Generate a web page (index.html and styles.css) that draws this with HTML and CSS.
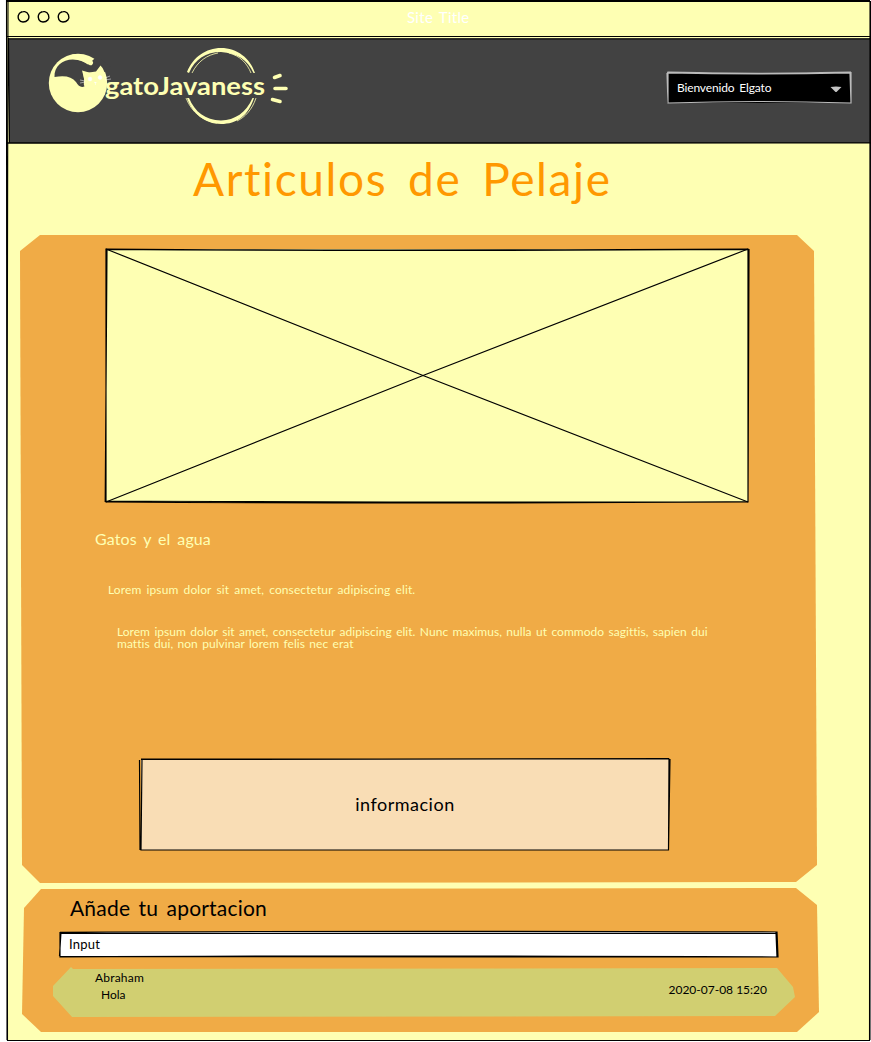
FILE: index.html
```html
<!DOCTYPE html>
<html lang="es">
<head>
<meta charset="utf-8">
<title>Articulos de Pelaje</title>
<link rel="stylesheet" href="styles.css">
</head>
<body>
<div class="window">
  <div class="titlebar">
    <svg class="dots" width="54" height="14" viewBox="0 0 54 14">
      <path d="M3 3C6 .8 10 1 11.500 5C13 9 10 12 6 12C2 12 .5 8 1.500 5Q2 3 5 1.700"/>
      <path d="M23 3C26 .8 30 1 31.500 5C33 9 30 12 26 12C22 12 20.500 8 21.500 5Q22 3 25 1.700"/>
      <path d="M43 3C46 .8 50 1 51.500 5C53 9 50 12 46 12C42 12 40.500 8 41.500 5Q42 3 45 1.700"/>
    </svg>
    <span class="site-title">Site Title</span>
  </div>
  <header class="header">
    <svg class="logo" width="242" height="82" viewBox="48 45 242 82">
      <circle class="cream" cx="78" cy="83" r="29.200"/>
      <path class="gap" d="M54.500 77C54 66 63 59 74 59.500C81 60 85 62.500 88 64.500L92 61L97 56L112 68L101 74L83 72L85 86Q80 89 76 82Q70 74 54.500 77Z"/>
      <path class="tail" d="M74 56.700C82 57 86 59.500 90.500 62.700"/>
      <path class="cream" d="M82 70.500L89 72.500L96 71.500L100.500 65.500Q104 69 106 77V84L100 89L87 89Q82 85 84.500 80Z"/>
      <g class="face"><circle cx="90" cy="79" r="1.900"/><circle cx="100" cy="77.500" r="1.900"/><path d="M94 82l1.500 1 1-1M95.500 83v2M80 80l5 1M80 83l5-1M105 78l5-2M105 80l6-1"/></g>
      <text class="logo-text" x="105" y="95" textLength="160" lengthAdjust="spacingAndGlyphs">gatoJavaness</text>
      <path class="cream" d="M187 72C193 57 206 48 221 48C237 48 250 58 255 73L253.500 73C248 60 237 53 221 52C206 52 195 59 189 73Z"/>
      <path class="cream" d="M187 98C192 113 205 124 221 124C237 124 248 116 254 98L252.500 98C246 113 235 120 221 120.500C205 120 195 112 189 98Z"/>
      <path class="thin" d="M192 73C198 61 207 55 218 53M229 53C240 56 247 63 251 73M186 98C192 113 203 121 217 123M256 98C252 110 245 117 237 121"/>
      <path class="rays" d="M274.500 77.500L280 75.500M275 88.500H286M272.500 99.500L280 101.500"/>
    </svg>
    <div class="select">
      <span class="user">Bienvenido Elgato</span>
      <svg class="caret" width="12" height="7" viewBox="0 0 12 7"><path d="M.5 1Q6 0 11.500 1L6.500 6H5.500Z"/></svg>
      <svg class="sketch light" viewBox="0 0 184 31" preserveAspectRatio="none"><path d="M0 1L1 31Q90 28 184 31L183 1Q90 3 0 1M184 0L184 30M1 30L1 0Q90 2 184 0"/></svg>
    </div>
  </header>
  <h1 class="page-title"><span class="title-text">Articulos de Pelaje</span></h1>
  <main class="content">
    <section class="card article">
      <div class="image">
        <svg class="sketch" viewBox="0 0 642 253"><path d="M0 0L317 126.500L642 253M0 253L317 126.500L642 0"/><path d="M0 0Q250 2 642 0V253Q300 255 0 253ZM0 .5Q300 2.500 642 .5M643 0L642 253M1 0L-.8 253M0 252Q450 254 642 252.500"/></svg>
      </div>
      <h2 class="article-title">Gatos y el agua</h2>
      <p class="lead">Lorem ipsum dolor sit amet, consectetur adipiscing elit.</p>
      <p class="body-text"><span class="line-one">Lorem ipsum dolor sit amet, consectetur adipiscing elit. Nunc maximus, nulla ut commodo sagittis, sapien dui</span><br><span class="line-two">mattis dui, non pulvinar lorem felis nec erat</span></p>
      <div class="info"><span class="info-text">informacion</span>
        <svg class="sketch" viewBox="0 0 528 91"><path d="M0 0Q260 1 528 0L527.500 91Q260 90 0 91L1 0M-1.500 1L-1 91M529 0L527.500 91M0 .5L528 -.5"/></svg>
      </div>
    </section>
    <section class="card comments">
      <h2 class="add-title">Añade tu aportacion</h2>
      <div class="field"><span class="field-text">Input</span>
        <svg class="sketch" viewBox="0 0 717 25"><path d="M0 .3Q300 -1.500 717 0L718 25Q300 23 0 25L0 0M0 1.200Q200 2 717 1.500L716 1L717 25Q350 26 0 24.500M1 0L-.5 24"/></svg>
      </div>
      <article class="comment">
        <div><div class="author">Abraham</div><div class="message">Hola</div></div>
        <time class="date">2020-07-08 15:20</time>
      </article>
    </section>
  </main>
  <svg class="outline" viewBox="0 0 871 1042">
    <path d="M7 1.500Q350 0 870 1.500L869.500 1041M8 0L7 520L7.500 1040.500L870 1040.500M6.500 0L7 1040M870.500 1L870 1040M7 .5H870M7 36.500Q400 35.500 870 36.500M9 39H870M8.500 38L9.500 143M7 143.300Q400 142 870 143M7 142.800H870"/>
    <path class="slit" d="M9 37.600H869"/>
  </svg>
</div>
</body>
</html>
```
FILE: styles.css
```css
* { box-sizing: border-box; }
body { margin: 0; background: #fff; color: #000; font-family: Lato, "Open Sans", sans-serif; font-variant-ligatures: none; overflow: hidden; }
h1, h2, p { margin: 0; font-weight: 300; }
span, time { white-space: nowrap; }
.window { width: 871px; height: 1042px; padding: 0 1px 1px 7px; background: #feffb3; background-clip: content-box; }
.titlebar { height: 38px; padding: 10px 0 0 10px; display: flex; }
.dots { fill: none; stroke: #000; stroke-width: 1.4; }
.site-title { margin: -2px 0 0 336px; font-size: 15px; line-height: 18px; letter-spacing: .3px; word-spacing: 2px; color: #fff; }
.header { height: 105px; margin-left: 2px; padding: 7px 19px 0 39px; display: flex; justify-content: space-between; background: #424242; }
.cream { fill: #feffb3; }
.tail { fill: none; stroke: #feffb3; stroke-width: 5; stroke-linecap: round; }
.gap { fill: #424242; }
.face { fill: #fff; stroke: #fff; stroke-width: .5; }
.logo-text { fill: #feffb3; font: 700 25px Lato, sans-serif; }
.thin { fill: none; stroke: #feffb3; stroke-width: .8; }
.rays { fill: none; stroke: #feffb3; stroke-width: 3.6; stroke-linecap: round; }
.select { position: relative; width: 184px; height: 31px; margin-top: 27px; padding: 0 9px 0 10px; display: flex; justify-content: space-between; align-items: center; background: #000; color: #fff; }
.user { font-size: 12px; letter-spacing: -.15px; word-spacing: 2px; }
.caret { fill: #c4c4c4; margin-top: 4px; }
.sketch { position: absolute; inset: 0; width: 100%; height: 100%; overflow: visible; fill: none; stroke: #000; stroke-width: 1.2; pointer-events: none; }
.light { stroke: #bbb; }
.page-title { height: 92px; padding-left: 186px; font-size: 46px; line-height: 71px; font-weight: 400; letter-spacing: 1.6px; word-spacing: 7.5px; color: #ff9800; }
.content { padding-left: 13px; }
.card { width: 797px; background: #f0ab46; }
.article { height: 648px; padding: 14px 0 0 86px; color: #feffb3; clip-path: polygon(20px 0, 777px 0, 794px 16px, 797px 630px, 776px 647px, 20px 648px, 2px 630px, 0 16px); }
.image { position: relative; width: 642px; height: 253px; background: #feffb3; }
.article-title { margin: 27px 0 0 -11px; font-size: 16px; line-height: 20px; font-weight: 400; letter-spacing: .1px; word-spacing: 2.7px; }
.lead { margin: 32px 0 0 2px; font-size: 12px; line-height: 17px; font-weight: 400; letter-spacing: .1px; word-spacing: 2px; }
.body-text { margin: 28px 0 0 11px; font-size: 12px; line-height: 12px; font-weight: 400; letter-spacing: .03px; word-spacing: 1.3px; }
.info { position: relative; width: 528px; height: 91px; margin: 109px 0 0 35px; padding-bottom: 2px; display: flex; align-items: center; justify-content: center; background: #f9ddb5; color: #000; font-size: 18px; letter-spacing: .5px; }
.comments { height: 144px; margin: 5px 0 0 2px; padding: 6px 0 0 38px; clip-path: polygon(19px 1px, 774px 0, 795px 17px, 797px 124px, 775px 144px, 19px 144px, 0 126px, 2px 20px); }
.add-title { padding-left: 10px; font-size: 21px; line-height: 27px; font-weight: 400; letter-spacing: .2px; word-spacing: 2.8px; }
.field { position: relative; width: 717px; height: 25px; margin-top: 11px; padding-left: 9px; background: #fff; font-size: 13px; line-height: 25px; letter-spacing: .2px; }
.comment { width: 742px; height: 50px; margin: 10px 0 0 -7px; padding: 2px 28px 0 42px; display: flex; justify-content: space-between; background: #d1cf71; font-size: 12px; line-height: 17px; clip-path: polygon(18px 0, 20px 2px, 724px 1px, 740px 20px, 742px 30px, 722px 49px, 19px 50px, 0 29px, 0 19px); }
.author { letter-spacing: .2px; }
.message { padding-left: 6px; }
.date { padding-top: 12px; }
.outline { position: absolute; left: 0; top: 0; width: 871px; height: 1042px; fill: none; stroke: #000; stroke-width: 1.1; pointer-events: none; }
.slit { stroke: #feffb3; stroke-width: .8; }
```
